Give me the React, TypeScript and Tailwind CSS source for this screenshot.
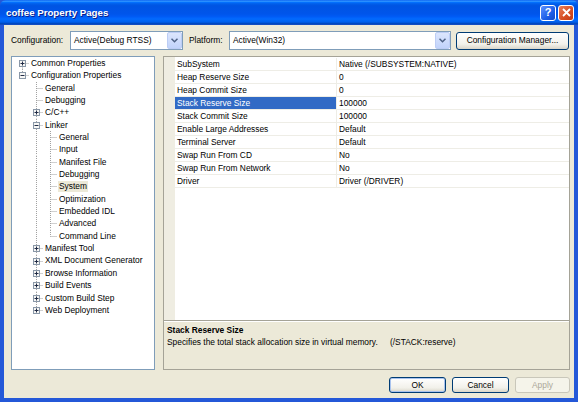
import React from 'react';

type Conn = 'tee' | 'end' | 'first';

type TreeRow = {
  label: string;
  level: number;
  guides: boolean[];
  conn: Conn;
  box?: '+' | '-';
  selected?: boolean;
};

const TREE: TreeRow[] = [
  { label: 'Common Properties', level: 0, guides: [], conn: 'first', box: '+' },
  { label: 'Configuration Properties', level: 0, guides: [], conn: 'end', box: '-' },
  { label: 'General', level: 1, guides: [false], conn: 'tee' },
  { label: 'Debugging', level: 1, guides: [false], conn: 'tee' },
  { label: 'C/C++', level: 1, guides: [false], conn: 'tee', box: '+' },
  { label: 'Linker', level: 1, guides: [false], conn: 'tee', box: '-' },
  { label: 'General', level: 2, guides: [false, true], conn: 'tee' },
  { label: 'Input', level: 2, guides: [false, true], conn: 'tee' },
  { label: 'Manifest File', level: 2, guides: [false, true], conn: 'tee' },
  { label: 'Debugging', level: 2, guides: [false, true], conn: 'tee' },
  { label: 'System', level: 2, guides: [false, true], conn: 'tee', selected: true },
  { label: 'Optimization', level: 2, guides: [false, true], conn: 'tee' },
  { label: 'Embedded IDL', level: 2, guides: [false, true], conn: 'tee' },
  { label: 'Advanced', level: 2, guides: [false, true], conn: 'tee' },
  { label: 'Command Line', level: 2, guides: [false, true], conn: 'end' },
  { label: 'Manifest Tool', level: 1, guides: [false], conn: 'tee', box: '+' },
  { label: 'XML Document Generator', level: 1, guides: [false], conn: 'tee', box: '+' },
  { label: 'Browse Information', level: 1, guides: [false], conn: 'tee', box: '+' },
  { label: 'Build Events', level: 1, guides: [false], conn: 'tee', box: '+' },
  { label: 'Custom Build Step', level: 1, guides: [false], conn: 'tee', box: '+' },
  { label: 'Web Deployment', level: 1, guides: [false], conn: 'end', box: '+' },
];

const PROPS: { name: string; value: string; selected?: boolean }[] = [
  { name: 'SubSystem', value: 'Native (/SUBSYSTEM:NATIVE)' },
  { name: 'Heap Reserve Size', value: '0' },
  { name: 'Heap Commit Size', value: '0' },
  { name: 'Stack Reserve Size', value: '100000', selected: true },
  { name: 'Stack Commit Size', value: '100000' },
  { name: 'Enable Large Addresses', value: 'Default' },
  { name: 'Terminal Server', value: 'Default' },
  { name: 'Swap Run From CD', value: 'No' },
  { name: 'Swap Run From Network', value: 'No' },
  { name: 'Driver', value: 'Driver (/DRIVER)' },
];

const ROW_H = 12.35;

// one 14px column of tree lines: vertical guide, connector, optional +/- box
function TreeCell({ guide, conn, box }: { guide?: boolean; conn?: Conn; box?: '+' | '-' }) {
  const mid = 6.5;
  return (
    <svg width="14" height={ROW_H} viewBox={`0 0 14 ${ROW_H}`} className="shrink-0">
      {guide && <line x1="7.5" y1="0" x2="7.5" y2={ROW_H} stroke="#a0a0a0" strokeDasharray="1 1" />}
      {conn && (
        <>
          <line
            x1="7.5"
            y1={conn === 'first' ? mid : 0}
            x2="7.5"
            y2={conn === 'end' ? mid : ROW_H}
            stroke="#a0a0a0"
            strokeDasharray="1 1"
          />
          <line x1="7.5" y1={mid} x2="14" y2={mid} stroke="#a0a0a0" strokeDasharray="1 1" />
        </>
      )}
      {box && (
        <>
          <rect x="4.5" y="3.5" width="6" height="6" fill="#f7f7f5" stroke="#8a98a8" />
          <line x1="5.5" y1={mid} x2="9.5" y2={mid} stroke="#1f2a44" />
          {box === '+' && <line x1="7.5" y1="4.5" x2="7.5" y2="8.5" stroke="#1f2a44" />}
        </>
      )}
    </svg>
  );
}

function Dropdown({ text, width }: { text: string; width: string }) {
  return (
    <div className={`${width} h-[19px] bg-white border border-[#7f9db9] flex items-center`}>
      <span className="flex-1 pl-[3px] truncate">{text}</span>
      <div className="w-[15px] h-[17px] rounded-[2px] border border-[#bccdf5] bg-[linear-gradient(to_bottom,#dce6fd,#c1d3fb)] flex items-center justify-center">
        <svg width="7" height="5" viewBox="0 0 7 5">
          <path d="M0.5 0.8 L3.5 3.8 L6.5 0.8" fill="none" stroke="#4d6185" strokeWidth="1.5" />
        </svg>
      </div>
    </div>
  );
}

function XpButton({ label, isDefault, disabled, className }: { label: string; isDefault?: boolean; disabled?: boolean; className: string }) {
  if (disabled) {
    return (
      <div className={`${className} rounded-[3px] border border-[#c9c7ba] bg-[#f5f4ea] text-[#aca899] flex items-center justify-center`}>
        {label}
      </div>
    );
  }
  return (
    <div
      className={`${className} rounded-[3px] border border-[#003c74] bg-[linear-gradient(to_bottom,#ffffff,#f2f1ea_70%,#d9d5c9)] flex items-center justify-center ${
        isDefault ? 'shadow-[inset_0_0_0_1px_#a9c3ee]' : ''
      }`}
    >
      {label}
    </div>
  );
}

export default function App() {
  return (
    <div className="w-[578px] h-[402px] flex flex-col bg-[#2458d8] px-[4px] pb-[4px] font-['Liberation_Sans',Arial,sans-serif] text-[8.4px] text-black leading-none">
      {/* title bar */}
      <div className="-mx-[4px] h-[25px] shrink-0 rounded-t-[6px] bg-[linear-gradient(to_bottom,#0058ee_0%,#3593ff_4%,#288eff_6%,#127dff_8%,#036ffc_10%,#0262ee_14%,#0057e5_20%,#0054e3_24%,#0055eb_56%,#005bf5_66%,#026afe_76%,#0062ef_86%,#0052d6_92%,#0040ab_96%,#2458d8_100%)] flex items-center pl-[6px] pr-[4px]">
        <span className="flex-1 text-white font-bold text-[9.7px] [text-shadow:1px_1px_0_#0a1e8c]">coffee Property Pages</span>
        <div className="w-[16px] h-[16px] rounded-[3px] border border-white bg-[linear-gradient(135deg,#5f92ff,#1c5ee8_60%,#1148c9)] flex items-center justify-center text-white font-bold text-[11px]">
          ?
        </div>
        <div className="ml-[2px] w-[16px] h-[16px] rounded-[3px] border border-white bg-[linear-gradient(135deg,#e7805c,#d64d22_60%,#c13b14)] flex items-center justify-center">
          <svg width="9" height="9" viewBox="0 0 9 9">
            <path d="M1 1 L8 8 M8 1 L1 8" stroke="white" strokeWidth="1.8" />
          </svg>
        </div>
      </div>

      {/* body */}
      <div className="flex-1 bg-[#ece9d8] pl-[7px] pr-[4px] pt-[6px] flex flex-col">
        <div className="h-[19px] flex items-center">
          <span className="w-[59px]">Configuration:</span>
          <Dropdown text="Active(Debug RTSS)" width="w-[113px]" />
          <span className="w-[46px] pl-[6px]">Platform:</span>
          <Dropdown text="Active(Win32)" width="w-[222px]" />
          <XpButton label="Configuration Manager..." className="ml-[5px] w-[113px] h-[18px]" />
        </div>

        <div className="mt-[6px] h-[314px] flex gap-[8px]">
          {/* tree */}
          <div className="w-[144px] bg-white border border-[#7f9db9] pl-[3px]">
            {TREE.map((row, i) => (
              <div key={i} className="flex items-center" style={{ height: ROW_H }}>
                {row.guides.map((g, j) => (
                  <TreeCell key={j} guide={g} />
                ))}
                <TreeCell conn={row.conn} box={row.box} />
                <span className={`ml-[1px] px-[1px] py-[1px] whitespace-nowrap ${row.selected ? 'bg-[#ece9d8]' : ''}`}>
                  {row.label}
                </span>
              </div>
            ))}
          </div>

          {/* property grid */}
          <div className="flex-1 border border-[#a5a397] bg-white flex flex-col">
            <div className="flex-1 flex">
              <div className="w-[11px] bg-[#efede2]" />
              <div className="flex-1 pt-[1px]">
                {PROPS.map((p) => (
                  <div key={p.name} className="h-[13px] flex border-b border-[#eeede6]">
                    <div
                      className={`w-[162px] pl-[2px] flex items-center border-r border-[#eeede6] ${
                        p.selected ? 'bg-[#316ac5] text-white' : ''
                      }`}
                    >
                      {p.name}
                    </div>
                    <div className="flex-1 pl-[2px] flex items-center">{p.value}</div>
                  </div>
                ))}
              </div>
            </div>
            <div className="h-[49px] bg-[#ece9d8] border-t border-[#a5a397] shadow-[inset_0_1px_0_#ffffff] pl-[3px] pt-[5px]">
              <div className="font-bold h-[10px]">Stack Reserve Size</div>
              <div className="mt-[2px] flex">
                <span className="w-[223px]">Specifies the total stack allocation size in virtual memory.</span>
                <span>(/STACK:reserve)</span>
              </div>
            </div>
          </div>
        </div>

        <div className="mt-[7px] flex justify-end gap-[6px]">
          <XpButton label="OK" isDefault className="w-[57px] h-[16px]" />
          <XpButton label="Cancel" className="w-[57px] h-[16px]" />
          <XpButton label="Apply" disabled className="w-[55px] h-[16px]" />
        </div>
      </div>
    </div>
  );
}
